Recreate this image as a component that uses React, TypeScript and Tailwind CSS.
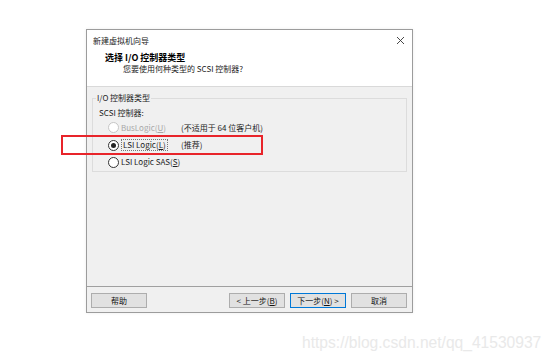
import React from 'react';

const font = "font-['Microsoft_YaHei','Noto_Sans_CJK_SC','Noto_Sans',sans-serif]";

function Radio({ checked, disabled }: { checked?: boolean; disabled?: boolean }) {
  return (
    <span
      className={`flex h-[11px] w-[11px] shrink-0 items-center justify-center rounded-full border bg-white ${
        disabled ? 'border-[#c6c6c6]' : 'border-[#333333]'
      }`}
    >
      {checked && <span className="h-[5px] w-[5px] rounded-full bg-[#222222]" />}
    </span>
  );
}

function WinButton({ children, primary }: { children: React.ReactNode; primary?: boolean }) {
  return (
    <div
      className={`flex h-[15px] w-[56px] items-center justify-center bg-[#e1e1e1] text-[8px] leading-none text-[#111] ${
        primary ? 'border border-[#0078d7]' : 'border border-[#adadad]'
      }`}
    >
      {children}
    </div>
  );
}

export default function App() {
  return (
    <div className={`relative h-[363px] w-[554px] overflow-hidden bg-white ${font}`}>
      <div className="pl-[86px] pt-[29px]">
        {/* Dialog window */}
        <div className="flex h-[284px] w-[327px] flex-col border border-[#9c9c9c] bg-[#f0f0f0] shadow-[0_0_3px_rgba(0,0,0,0.08)]">
          {/* Header */}
          <div className="h-[57px] border-b border-[#d9d9d9] bg-white">
            <div className="flex h-[21px] items-center justify-between pl-[6px] pr-[7px]">
              <span className="text-[8px] leading-none text-[#222]">新建虚拟机向导</span>
              <svg width="9" height="9" viewBox="0 0 9 9">
                <path d="M1 1 L8 8 M8 1 L1 8" stroke="#333" strokeWidth="0.9" />
              </svg>
            </div>
            <div className="pl-[18px] pt-[2px] text-[9px] font-bold leading-[10px] text-black">
              选择 I/O 控制器类型
            </div>
            <div className="pl-[36px] pt-[1px] text-[8px] leading-[9px] text-[#222]">
              您要使用何种类型的 SCSI 控制器?
            </div>
          </div>

          {/* Body */}
          <div className="flex-1 px-[5px] pt-[11px]">
            <div className="relative h-[74px] border border-[#dcdcdc]">
              <span className="absolute left-[3px] top-[-6px] bg-[#f0f0f0] px-[1px] text-[8px] leading-[10px] text-[#222]">
                I/O 控制器类型
              </span>
              <div className="pl-[6px] pt-[9px] text-[8px] leading-[10px] text-[#222]">SCSI 控制器:</div>
              <div className="grid grid-cols-[73px_1fr] pl-[15px] pt-[1px] text-[8px] text-[#222]">
                <div className="flex h-[17px] items-center gap-[2px]">
                  <Radio disabled />
                  <span className="text-[#a8a8a8]">
                    BusLogic(<u>U</u>)
                  </span>
                </div>
                <div className="flex h-[17px] items-center">(不适用于 64 位客户机)</div>
                <div className="flex h-[18px] items-center gap-[2px]">
                  <Radio checked />
                  <span className="border border-dotted border-[#777] px-[1px] leading-[10px]">
                    LSI Logic(<u>L</u>)
                  </span>
                </div>
                <div className="flex h-[18px] items-center">(推荐)</div>
                <div className="col-span-2 flex h-[16px] items-center gap-[2px]">
                  <Radio />
                  <span>
                    LSI Logic SAS(<u>S</u>)
                  </span>
                </div>
              </div>
            </div>
          </div>

          {/* Footer */}
          <div className="flex h-[26px] items-start border-t border-[#a0a0a0] pl-[4px] pr-[5px] pt-[6px]">
            <WinButton>帮助</WinButton>
            <div className="ml-auto flex gap-[5px]">
              <WinButton>
                &lt; 上一步(<u>B</u>)
              </WinButton>
              <WinButton primary>
                下一步(<u>N</u>) &gt;
              </WinButton>
              <WinButton>取消</WinButton>
            </div>
          </div>
        </div>
      </div>

      {/* Red annotation */}
      <div className="absolute left-[61px] top-[135px] h-[20px] w-[202px] border-2 border-[#e8242a]" />

      {/* Watermark */}
      <div className="absolute left-[302px] top-[333px] font-['Liberation_Sans',Arial,sans-serif] text-[15.6px] leading-[20px] text-[#e9e9e9]">
        https://blog.csdn.net/qq_41530937
      </div>
    </div>
  );
}
